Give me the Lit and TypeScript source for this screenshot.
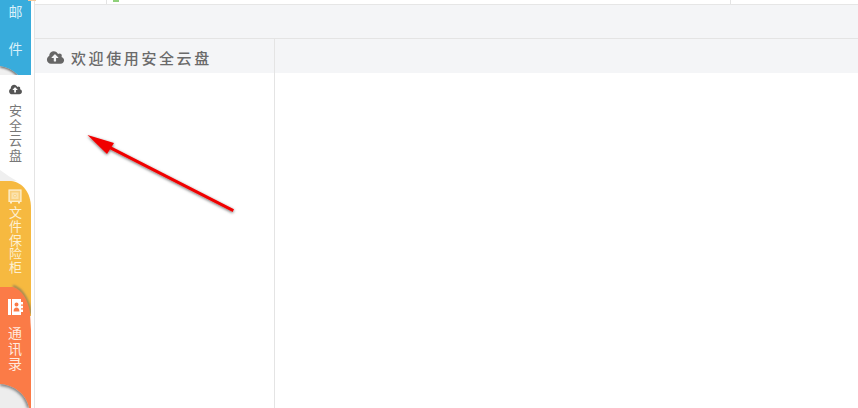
import { LitElement, html, css, svg } from "lit";
import { customElement } from "lit/decorators.js";

const CLOUD =
  "M1280 864q0-14-9-23l-352-352q-9-9-23-9t-23 9l-351 351q-10 12-10 24 0 14 9 23t23 9h224v352q0 13 9.5 22.5t22.5 9.5h192q13 0 22.5-9.5t9.5-22.5v-352h224q13 0 22.5-9.5t9.5-22.5zm640 288q0 159-112.5 271.5t-271.5 112.5h-1088q-185 0-316.5-131.5t-131.5-316.5q0-130 70-240t188-165q-2-30-2-43 0-212 150-362t362-150q156 0 285.5 87t188.5 231q71-62 166-62 106 0 181 75t75 181q0 76-41 138 130 31 213.5 135.5t83.5 238.5z";

const tabsArt = svg`
  <svg class="art" width="34" height="408" viewBox="0 0 34 408">
    <defs>
      <filter id="b" x="-30%" y="-30%" width="160%" height="160%"><feGaussianBlur stdDeviation="1.5"/></filter>
      <filter id="b2" x="-30%" y="-30%" width="160%" height="160%"><feGaussianBlur stdDeviation="1"/></filter>
      <clipPath id="clip-blue"><path d="M0 66 C7 67 13 70 18 75 L0 75 Z"/></clipPath>
      <clipPath id="clip-top"><path d="M0 170 C6 174 11 178 17 181 L0 181 Z"/></clipPath>
      <clipPath id="clip-yellow"><rect x="0" y="181" width="31" height="135"/></clipPath>
      <clipPath id="clip-bottom"><path d="M0 384 C14 385 26 394 29 408 L0 408 Z"/></clipPath>
    </defs>
    <rect x="0" y="0" width="31" height="75" fill="#38acdc"/>
    <path d="M0 66 C7 67 13 70 18 75 L0 75 Z" fill="#f0f0f0"/>
    <g clip-path="url(#clip-blue)">
      <path d="M0 66 C7 67 13 70 18 75" fill="none" stroke="#6a6a6a" stroke-width="3" filter="url(#b2)"/>
    </g>
    <path d="M0 170 C6 174 11 178 17 181 L0 181 Z" fill="#efefef"/>
    <g clip-path="url(#clip-top)">
      <path d="M0 181 L17 181" fill="none" stroke="#8d8d8d" stroke-width="3" filter="url(#b2)"/>
    </g>
    <path d="M0 181 L11 181 C22 182 31 192 31 208 L31 316 L0 316 Z" fill="#f6b940"/>
    <g clip-path="url(#clip-yellow)">
      <path d="M13 286 C22 289 28 299 31 314" fill="none" stroke="#8a7a58" stroke-width="2" filter="url(#b2)"/>
    </g>
    <path d="M0 287 L13 287 C22 290 28 300 30 313 L31 330 L31 408 L0 408 Z" fill="#fb7b47"/>
    <path d="M0 384 C14 385 26 394 29 408 L0 408 Z" fill="#ededed"/>
    <g clip-path="url(#clip-bottom)">
      <path d="M0 384 C14 385 26 394 29 408" fill="none" stroke="#666" stroke-width="3" filter="url(#b)"/>
    </g>
  </svg>`;

const safeIcon = svg`
  <svg width="14" height="15" viewBox="0 0 14 15">
    <rect x="0.5" y="0.5" width="13" height="12.5" fill="#f8cf7c"/>
    <path fill="#fdeecb" fill-rule="evenodd" d="M0.5 0.5H13.5V13H12V14.5H10V13H4V14.5H2V13H0.5ZM1.8 1.8V11.7H12.2V1.8Z"/>
    <path fill="#fbe2ab" fill-rule="evenodd" d="M3.5 3.5H10.5V10H3.5ZM7 5A1.7 1.7 0 1 0 7 8.4A1.7 1.7 0 1 0 7 5Z"/>
    <circle cx="7" cy="6.7" r="0.9" fill="#fdeecb"/>
  </svg>`;

const bookIcon = svg`
  <svg width="15" height="16" viewBox="0 0 15 16">
    <path fill="#fff" fill-rule="evenodd" d="M0 0H3V16H0ZM4 0H13V3H15V5.5H13V6.8H15V9.3H13V10.6H15V13H13V16H4ZM8.5 3.6A2 2 0 1 0 8.5 7.6A2 2 0 1 0 8.5 3.6ZM5.6 12.4H11.4C11.4 9.8 10.2 8.6 8.5 8.6C6.8 8.6 5.6 9.8 5.6 12.4Z"/>
  </svg>`;

@customElement("app-root")
export class AppRoot extends LitElement {
  static styles = css`
    :host {
      display: flex;
      width: 858px;
      height: 408px;
      overflow: hidden;
      position: relative;
      background: #fff;
      font-family: "Noto Sans CJK SC", "Liberation Sans", sans-serif;
    }
    .side {
      position: relative;
      width: 34px;
      flex: none;
      border-right: 1px solid #e4e4e4;
      display: flex;
      flex-direction: column;
    }
    .art { position: absolute; left: 0; top: 0; }
    .tab {
      position: relative;
      width: 31px;
      display: flex;
      flex-direction: column;
      align-items: center;
      flex: none;
      box-sizing: border-box;
    }
    .v {
      display: block;
      writing-mode: vertical-rl;
      text-orientation: upright;
      white-space: nowrap;
      line-height: 16px;
    }
    .mail { height: 75px; padding-top: 5px; color: #d9f0fa; font-size: 14px; }
    .mail .v { letter-spacing: 22.5px; }
    .pan { height: 106px; padding-top: 9px; color: #777; font-size: 13px; }
    .pan .cloud { width: 13px; height: 12px; fill: #555; margin-right: 1px; margin-bottom: 8px; }
    .pan .v { letter-spacing: 2px; margin-right: 1px; }
    .safe { height: 106px; padding-top: 8px; color: #fdf0d2; font-size: 13px; }
    .safe svg { margin-bottom: 2px; margin-right: 2px; }
    .safe .v { letter-spacing: 0.6px; margin-right: 1px; }
    .book { padding-top: 12px; color: #ffe9df; font-size: 14px; }
    .book svg { margin-bottom: 11px; margin-right: 1px; }
    .book .v { letter-spacing: 1.4px; margin-right: 1px; }

    .main { flex: 1; display: flex; flex-direction: column; min-width: 0; }
    .strip { height: 4px; flex: none; border-bottom: 1px solid #e6e6e6; background: #fff; display: flex; position: relative; }
    .c1 { width: 71px; border-right: 1px solid #e4e4e4; flex: none; }
    .c2 { width: 623px; border-right: 1px solid #e4e4e4; flex: none; }
    .pip { position: absolute; top: 0; }
    .pip.orange { left: -7px; width: 8px; height: 1px; background: #f6c89b; }
    .pip.green { left: 78px; width: 6px; height: 2px; background: #8fd07a; }
    .bar { height: 33px; flex: none; background: #f4f5f7; border-bottom: 1px solid #e4e4e4; }
    .body { flex: 1; display: flex; min-height: 0; }
    .left { width: 239px; flex: none; border-right: 1px solid #e4e4e4; }
    .right { flex: 1; }
    .head { height: 34px; background: #f4f5f7; display: flex; align-items: center; box-sizing: border-box; }
    .left .head { padding-left: 11px; gap: 6px; padding-top: 3px; }
    .head svg { width: 19px; height: 16px; fill: #666; flex: none; }
    .title { font-size: 15px; font-weight: 500; letter-spacing: 2.6px; color: #6a6a6a; line-height: 20px; white-space: nowrap; }
    .arrow { position: absolute; left: 0; top: 0; pointer-events: none; }
  `;

  render() {
    return html`
      <div class="side">
        ${tabsArt}
        <div class="tab mail"><span class="v">邮件</span></div>
        <div class="tab pan">
          <svg class="cloud" viewBox="0 0 1920 1792"><path d=${CLOUD}></path></svg>
          <span class="v">安全云盘</span>
        </div>
        <div class="tab safe">${safeIcon}<span class="v">文件保险柜</span></div>
        <div class="tab book">${bookIcon}<span class="v">通讯录</span></div>
      </div>
      <div class="main">
        <div class="strip">
          <div class="c1"></div><div class="c2"></div>
          <i class="pip orange"></i><i class="pip green"></i>
        </div>
        <div class="bar"></div>
        <div class="body">
          <div class="left">
            <div class="head">
              <svg viewBox="0 0 1920 1792"><path d=${CLOUD}></path></svg>
              <span class="title">欢迎使用安全云盘</span>
            </div>
          </div>
          <div class="right"><div class="head"></div></div>
        </div>
      </div>
      <svg class="arrow" width="858" height="408" viewBox="0 0 858 408">
        <defs>
          <filter id="sh" x="-20%" y="-20%" width="140%" height="140%">
            <feDropShadow dx="0" dy="1" stdDeviation="1.6" flood-color="#000" flood-opacity="0.6"></feDropShadow>
          </filter>
        </defs>
        <g filter="url(#sh)">
          <path d="M232 210 L109 147" stroke="#f00000" stroke-width="3" fill="none" stroke-linecap="square"></path>
          <path d="M87.5 135 L114 143 L107 154 Z" fill="#f00000"></path>
        </g>
      </svg>
    `;
  }
}
